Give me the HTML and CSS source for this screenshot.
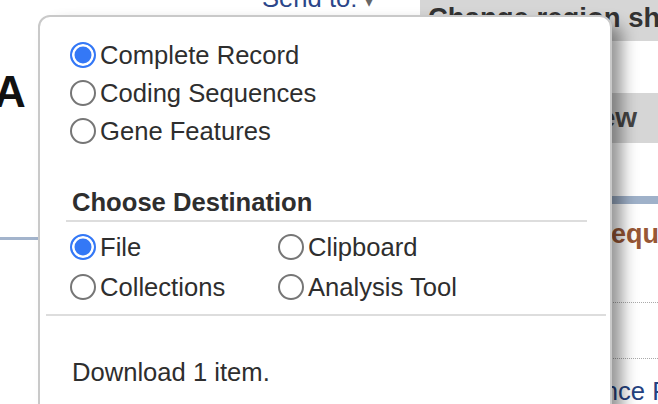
FILE: index.html
```html
<!DOCTYPE html>
<html lang="en">
<head>
<meta charset="utf-8">
<title>Send to</title>
<link rel="stylesheet" href="styles.css">
</head>
<body>
<div class="page">
  <div class="main">
    <div class="sendto"><a class="sendto-link" href="#">Send to:</a><span class="caret">▾</span></div>
    <h1 class="title">A</h1>
    <div class="rule"></div>
  </div>
  <aside class="side">
    <div class="box box-region">Change region shown</div>
    <div class="box box-update">Update View</div>
    <div class="side-bar"></div>
    <h2 class="side-head">Sequence</h2>
    <ul class="side-list"><li class="item-a"></li><li class="item-b"></li></ul>
    <a class="side-link" href="#">Reference Features</a>
  </aside>
  <div class="popup">
    <ul class="choices">
      <li class="choice"><span class="radio checked"></span>Complete Record</li>
      <li class="choice"><span class="radio"></span>Coding Sequences</li>
      <li class="choice"><span class="radio"></span>Gene Features</li>
    </ul>
    <h3 class="dest-head">Choose Destination</h3>
    <div class="dest-grid">
      <div class="choice"><span class="radio checked"></span>File</div>
      <div class="choice"><span class="radio"></span>Clipboard</div>
      <div class="choice"><span class="radio"></span>Collections</div>
      <div class="choice"><span class="radio"></span>Analysis Tool</div>
    </div>
    <div class="divider"></div>
    <p class="note">Download 1 item.</p>
  </div>
</div>
</body>
</html>
```

FILE: styles.css
```css
html, body {
  margin: 0;
  padding: 0;
  background: #fff;
}

.page {
  position: relative;
  width: 658px;
  height: 404px;
  overflow: hidden;
  display: grid;
  grid-template-columns: 420px 238px;
  font-family: "Liberation Sans", Arial, sans-serif;
  color: #333;
}

/* left background column */
.main {
  display: flex;
  flex-direction: column;
}

.sendto {
  margin-top: -17px;
  padding-left: 262px;
  height: 30px;
  line-height: 30px;
  font-size: 25.6px;
  white-space: nowrap;
}

.sendto-link {
  color: #2b4689;
  text-decoration: none;
}

.caret {
  color: #666;
  font-size: 16px;
  margin-left: 8px;
}

.title {
  margin: 54px 0 0 -6px;
  font-size: 44px;
  line-height: 50px;
  font-weight: bold;
  color: #111;
}

.rule {
  margin-top: 120px;
  height: 3px;
  background: #a3b4cc;
}

/* right background column */
.side {
  display: flex;
  flex-direction: column;
  white-space: nowrap;
}

.box {
  background: #d6d6d6;
  font-weight: bold;
  color: #333;
}

.box-region {
  height: 41px;
  line-height: 36px;
  padding-left: 8px;
  font-size: 27.5px;
}

.box-update {
  margin-top: 52px;
  height: 50px;
  line-height: 50px;
  font-size: 28px;
  text-align: right;
  padding-right: 21px;
  color: #444;
}

.side-bar {
  margin-top: 53px;
  height: 8px;
  background: #9fb1c9;
}

.side-head {
  margin: 14px 0 0 0;
  padding-left: 173px;
  font-size: 27px;
  line-height: 32px;
  font-weight: bold;
  color: #985735;
}

.side-list {
  list-style: none;
  margin: 0;
  padding: 0;
}

.side-list li {
  border-bottom: 1px dotted #aaa;
}

.item-a {
  height: 52px;
}

.item-b {
  height: 55px;
}

.side-link {
  margin-top: 17px;
  padding-left: 107px;
  font-size: 25.6px;
  line-height: 30px;
  color: #24427f;
  text-decoration: none;
}

/* popup overlay */
.popup {
  position: absolute;
  left: 38px;
  top: 15px;
  width: 574px;
  height: 420px;
  box-sizing: border-box;
  border: 2px solid #c9c9c9;
  border-radius: 12px;
  background: #fff;
  box-shadow: 12px 8px 16px -2px rgba(0, 0, 0, 0.42);
  font-size: 25.6px;
  color: #2e2e2e;
}

.choices {
  list-style: none;
  margin: 0;
  padding: 19px 0 0 30px;
}

.choice {
  display: flex;
  align-items: center;
  gap: 4px;
  height: 38px;
  white-space: nowrap;
}

.radio {
  flex: none;
  width: 26px;
  height: 26px;
  box-sizing: border-box;
  border-radius: 50%;
  border: 2px solid #767676;
  background: #fff;
}

.radio.checked {
  border-color: #3478f6;
  background: #3478f6;
  box-shadow: inset 0 0 0 2.5px #fff;
}

.dest-head {
  margin: 34px 23px 0 26px;
  padding-left: 6px;
  font-size: 25.6px;
  line-height: 36px;
  font-weight: bold;
  color: #2e2e2e;
  border-bottom: 2px solid #ddd;
}

.dest-grid {
  display: grid;
  grid-template-columns: 208px 1fr;
  grid-auto-rows: 40px;
  margin: 5px 0 0 30px;
}

.dest-grid .choice {
  height: 40px;
}

.divider {
  margin: 7px 4px 0 6px;
  height: 2px;
  background: #ddd;
}

.note {
  margin: 37px 0 0 0;
  padding-left: 32px;
  line-height: 38px;
  white-space: nowrap;
}
```
